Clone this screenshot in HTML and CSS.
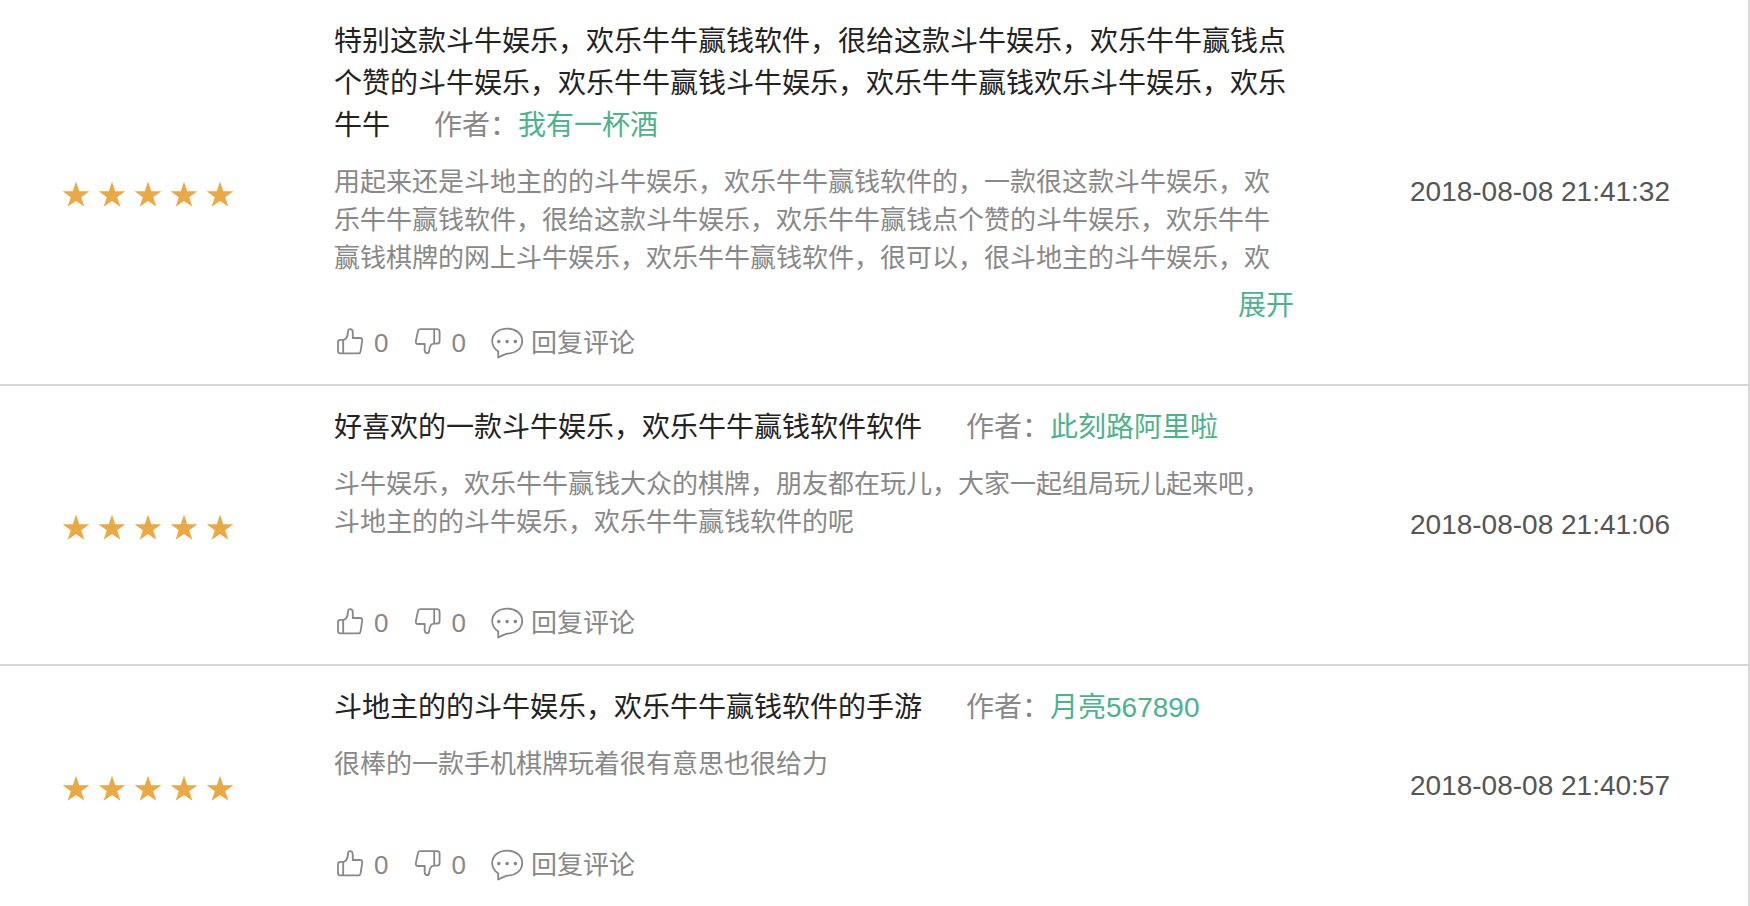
FILE: index.html
```html
<!DOCTYPE html>
<html lang="zh-CN">

<head>
    <meta charset="UTF-8">
    <meta name="viewport" content="width=device-width, initial-scale=1.0">
    <title>评论列表</title>
    <link rel="stylesheet" href="styles.css">
</head>

<body>
    <!-- shared icons -->
    <svg class="sprite" aria-hidden="true">
        <symbol id="star" viewBox="0 0 28 32">
            <path d="M14 5.6 L17.2 15.3 H27.4 L19.2 21.2 L22.4 30.8 L14 24.9 L5.6 30.8 L8.8 21.2 L0.6 15.3 H10.8 Z" />
        </symbol>
        <symbol id="up" viewBox="0 0 28 32">
            <path d="M7.2 12.8 H4.4 Q2 12.8 2 15.2 V24 Q2 26.4 4.4 26.4 H22.4 Q24.2 26.4 24.6 24.4 L26.2 13.6 Q26.4 11 24 11 H16.8 V5.4 Q16.6 2.2 14.2 2.2 Q12.2 2.2 12 4.4 Q11.8 9.4 10 11.4 Q9 12.6 7.2 12.8 V26.4" />
        </symbol>
        <symbol id="down" viewBox="0 0 28 32">
            <path d="M21.2 2.2 H7.2 Q5.4 2.2 5 4 L2.8 14.4 Q2.6 17 5 17 H11.8 L11.6 23 Q11.8 26.2 14 26.2 Q15.8 26.2 16.2 24 Q16.4 19.8 18 18 Q19.2 16.8 21.2 16.6 H24 Q26.6 16.6 26.6 14 V4.8 Q26.6 2.2 24 2.2 H21.2 V16.6" />
        </symbol>
        <symbol id="bubble" viewBox="0 0 34 34">
            <path d="M7.2 25.2 C3 22.8 1.2 18.8 1.2 15 C1.2 7.6 7.8 2.6 16.2 2.6 C24.6 2.6 31.2 7.6 31.2 15 C31.2 22.6 24.6 27.6 16.2 27.6 C14.8 28 10.4 29.6 7.2 31.6 Z" />
            <circle cx="7.8" cy="15.6" r="1.8" />
            <circle cx="16.1" cy="15.6" r="1.8" />
            <circle cx="24.4" cy="15.6" r="1.8" />
        </symbol>
    </svg>

    <ul class="reviews">
        <li class="review">
            <div class="stars" role="img" aria-label="5 星">
                <svg><use href="#star" /></svg>
                <svg><use href="#star" /></svg>
                <svg><use href="#star" /></svg>
                <svg><use href="#star" /></svg>
                <svg><use href="#star" /></svg>
            </div>
            <div class="content">
                <h2 class="title">特别这款斗牛娱乐，欢乐牛牛赢钱软件，很给这款斗牛娱乐，欢乐牛牛赢钱点个赞的斗牛娱乐，欢乐牛牛赢钱斗牛娱乐，欢乐牛牛赢钱欢乐斗牛娱乐，欢乐牛牛<span class="author">作者：<a href="#">我有一杯酒</a></span></h2>
                <p class="text">用起来还是斗地主的的斗牛娱乐，欢乐牛牛赢钱软件的，一款很这款斗牛娱乐，欢乐牛牛赢钱软件，很给这款斗牛娱乐，欢乐牛牛赢钱点个赞的斗牛娱乐，欢乐牛牛赢钱棋牌的网上斗牛娱乐，欢乐牛牛赢钱软件，很可以，很斗地主的斗牛娱乐，欢</p>
                <button type="button" class="expand">展开</button>
                <div class="actions">
                    <button type="button" aria-label="赞"><svg class="thumb"><use href="#up" /></svg>0</button>
                    <button type="button" aria-label="踩"><svg class="thumb"><use href="#down" /></svg>0</button>
                    <button type="button" class="reply"><svg class="bubble"><use href="#bubble" /></svg>回复评论</button>
                </div>
            </div>
            <time class="date">2018-08-08 21:41:32</time>
        </li>

        <li class="review">
            <div class="stars" role="img" aria-label="5 星">
                <svg><use href="#star" /></svg>
                <svg><use href="#star" /></svg>
                <svg><use href="#star" /></svg>
                <svg><use href="#star" /></svg>
                <svg><use href="#star" /></svg>
            </div>
            <div class="content">
                <h2 class="title">好喜欢的一款斗牛娱乐，欢乐牛牛赢钱软件软件<span class="author">作者：<a href="#">此刻路阿里啦</a></span></h2>
                <p class="text short">斗牛娱乐，欢乐牛牛赢钱大众的棋牌，朋友都在玩儿，大家一起组局玩儿起来吧，斗地主的的斗牛娱乐，欢乐牛牛赢钱软件的呢</p>
                <div class="actions">
                    <button type="button" aria-label="赞"><svg class="thumb"><use href="#up" /></svg>0</button>
                    <button type="button" aria-label="踩"><svg class="thumb"><use href="#down" /></svg>0</button>
                    <button type="button" class="reply"><svg class="bubble"><use href="#bubble" /></svg>回复评论</button>
                </div>
            </div>
            <time class="date">2018-08-08 21:41:06</time>
        </li>

        <li class="review">
            <div class="stars" role="img" aria-label="5 星">
                <svg><use href="#star" /></svg>
                <svg><use href="#star" /></svg>
                <svg><use href="#star" /></svg>
                <svg><use href="#star" /></svg>
                <svg><use href="#star" /></svg>
            </div>
            <div class="content">
                <h2 class="title">斗地主的的斗牛娱乐，欢乐牛牛赢钱软件的手游<span class="author">作者：<a href="#">月亮567890</a></span></h2>
                <p class="text short">很棒的一款手机棋牌玩着很有意思也很给力</p>
                <div class="actions">
                    <button type="button" aria-label="赞"><svg class="thumb"><use href="#up" /></svg>0</button>
                    <button type="button" aria-label="踩"><svg class="thumb"><use href="#down" /></svg>0</button>
                    <button type="button" class="reply"><svg class="bubble"><use href="#bubble" /></svg>回复评论</button>
                </div>
            </div>
            <time class="date">2018-08-08 21:40:57</time>
        </li>
    </ul>
</body>

</html>
```
FILE: styles.css
```css
* {
    box-sizing: border-box;
}

body {
    margin: 0;
    background: #fff;
    font-family: "Liberation Sans", "Noto Sans CJK SC", sans-serif;
    color: #888;
}

button {
    padding: 0;
    border: none;
    background: none;
    font-family: inherit;
    color: inherit;
    cursor: pointer;
}

.sprite {
    display: none;
}

.reviews {
    list-style: none;
    margin: 0;
    padding: 0;
    min-height: 100vh;
    border-right: 2px solid #d6d6d6;
}

.review {
    display: grid;
    grid-template-columns: 334px minmax(0, 1fr) 454px;
    align-items: center;
    border-bottom: 2px solid #d6d6d6;
}

.review:last-child {
    border-bottom: none;
}

/* rating */
.stars {
    display: flex;
    gap: 8px;
    padding-left: 62px;
}

.stars svg {
    width: 28px;
    height: 32px;
    fill: #eba945;
}

/* middle column */
.content {
    display: flex;
    flex-direction: column;
    padding: 21px 0;
}

.title {
    margin: 0 0 16px;
    font-size: 28px;
    font-weight: normal;
    line-height: 42px;
    color: #222;
}

.author {
    margin-left: 44px;
    color: #888;
}

.author a {
    color: #4cb28b;
    text-decoration: none;
}

.text {
    margin: 0;
    font-size: 26px;
    line-height: 38px;
}

.text.short {
    margin-bottom: 62px;
}

.expand {
    align-self: flex-end;
    margin-top: 12px;
    font-size: 28px;
    line-height: 34px;
    color: #4cb28b;
}

.actions {
    display: flex;
    gap: 25px;
    padding-left: 2px;
}

.actions button {
    display: flex;
    align-items: center;
    gap: 10px;
    height: 40px;
    font-size: 26px;
    line-height: 40px;
}

.actions .reply {
    gap: 6px;
}

.actions svg {
    fill: none;
    stroke: #888;
    stroke-width: 1.8;
    stroke-linejoin: round;
}

.thumb {
    width: 28px;
    height: 32px;
}

.bubble {
    width: 34px;
    height: 34px;
}

#bubble circle {
    fill: #888;
    stroke: none;
}

/* date */
.date {
    padding-right: 78px;
    font-size: 28px;
    line-height: 42px;
    text-align: right;
    color: #555;
}
```
